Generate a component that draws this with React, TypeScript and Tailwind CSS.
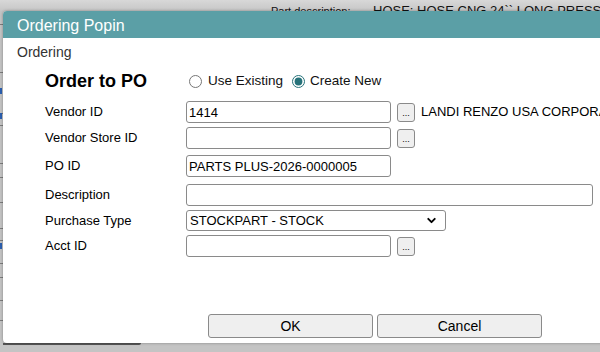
import React from "react";
import { ChevronDown } from "lucide-react";

const font = { fontFamily: '"Liberation Sans", Arial, sans-serif' };

const Field = ({ w, value = "" }: { w: string; value?: string }) => (
  <input
    readOnly
    value={value}
    className={`${w} h-[22px] border border-[#8a8a8a] rounded-[3px] bg-white px-[2px] text-[13px] text-black outline-none`}
  />
);

const Dots = () => (
  <button className="ml-[6px] w-[18px] h-[19px] border border-[#8a8a8a] rounded-[3px] bg-[#efefef] text-[9px] leading-[19px] text-black">
    ...
  </button>
);

const rowLines = [24, 72, 113, 125, 163, 177, 202, 228, 240, 263, 277, 300, 320];

const App = () => {
  return (
    // page behind the popin
    <div style={font} className="relative w-[600px] h-[352px] overflow-hidden bg-[#c4c4c4]">
      {/* top strip of the underlying page */}
      <div className="relative h-[11px] bg-gradient-to-b from-[#d8d8d8] to-[#c6c6c6] text-[#111] whitespace-nowrap">
        <span className="absolute left-[271px] top-[5px] text-[11px] leading-[13px]">Part description:</span>
        <span className="absolute left-[373px] top-[3px] text-[13px] leading-[15px]">HOSE: HOSE CNG 24`` LONG PRESS FITTING</span>
      </div>
      {/* table rows peeking out at the left */}
      {rowLines.map((y) => (
        <div key={y} className="absolute left-0 w-[4px] h-px bg-[#7c7c7c]" style={{ top: y }} />
      ))}
      <div className="absolute left-0 top-[88px] w-[2px] h-[6px] bg-[#2b5fb0]" />
      <div className="absolute left-0 top-[113px] w-[2px] h-[6px] bg-[#2b5fb0]" />
      <div className="absolute left-0 top-[243px] w-[2px] h-[6px] bg-[#2b5fb0]" />
      <div className="absolute left-[3px] top-[343px] w-[138px] h-[2px] bg-[#555] rounded-br-[2px]" />

      {/* popin */}
      <div className="absolute left-[3px] top-[11px] w-[660px] h-[332px] bg-white rounded-[4px] shadow-[0_0_3px_rgba(0,0,0,0.35)] overflow-hidden flex flex-col">
        <div className="h-[27px] bg-[#5b9fa6] pl-[14px] pt-[4px] text-[16px] leading-[22px] text-white">
          Ordering Popin
        </div>
        <div className="pl-[14px] pt-[6px] text-[14px] leading-[16px] text-[#333]">Ordering</div>

        {/* mode */}
        <div className="mt-[10px] h-[22px] flex items-center pl-[42px]">
          <div className="w-[141px] text-[18px] font-bold text-black">Order to PO</div>
          <label className="flex items-center text-[13.5px] text-[#111]">
            <input type="radio" name="mode" className="ml-[3px] w-[13px] h-[13px] accent-[#26727a]" />
            <span className="ml-[6px]">Use Existing</span>
          </label>
          <label className="flex items-center text-[13.5px] text-[#111] ml-[9px]">
            <input type="radio" name="mode" defaultChecked className="w-[13px] h-[13px] accent-[#26727a]" />
            <span className="ml-[5px]">Create New</span>
          </label>
        </div>

        {/* fields */}
        <div className="pl-[42px] text-[13px] text-black">
          <div className="mt-[9px] flex items-center">
            <div className="w-[141px]">Vendor ID</div>
            <Field w="w-[205px]" value="1414" />
            <Dots />
            <span className="ml-[6px] whitespace-nowrap">LANDI RENZO USA CORPORATION</span>
          </div>
          <div className="mt-[4px] flex items-center">
            <div className="w-[141px]">Vendor Store ID</div>
            <Field w="w-[205px]" />
            <Dots />
          </div>
          <div className="mt-[6px] flex items-center">
            <div className="w-[141px]">PO ID</div>
            <Field w="w-[205px]" value="PARTS PLUS-2026-0000005" />
          </div>
          <div className="mt-[7px] flex items-center">
            <div className="w-[141px]">Description</div>
            <Field w="w-[407px]" />
          </div>
          <div className="mt-[4px] flex items-center">
            <div className="w-[141px]">Purchase Type</div>
            <div className="relative">
              <select className="appearance-none w-[260px] h-[21px] border border-[#8a8a8a] rounded-[3px] bg-white pl-[3px] text-[13px] text-black outline-none">
                <option>STOCKPART - STOCK</option>
              </select>
              <ChevronDown size={13} strokeWidth={3.5} className="absolute right-[8px] top-[4px] text-black pointer-events-none" />
            </div>
          </div>
          <div className="mt-[4px] flex items-center">
            <div className="w-[141px]">Acct ID</div>
            <Field w="w-[205px]" />
            <Dots />
          </div>
        </div>

        {/* footer */}
        <div className="mt-auto mb-[5px] ml-[205px] flex gap-[4px] text-[14px] text-black">
          <button className="w-[165px] h-[24px] border border-[#8a8a8a] rounded-[3px] bg-[#efefef]">OK</button>
          <button className="w-[165px] h-[24px] border border-[#8a8a8a] rounded-[3px] bg-[#efefef]">Cancel</button>
        </div>
      </div>
    </div>
  );
};

export default App;
